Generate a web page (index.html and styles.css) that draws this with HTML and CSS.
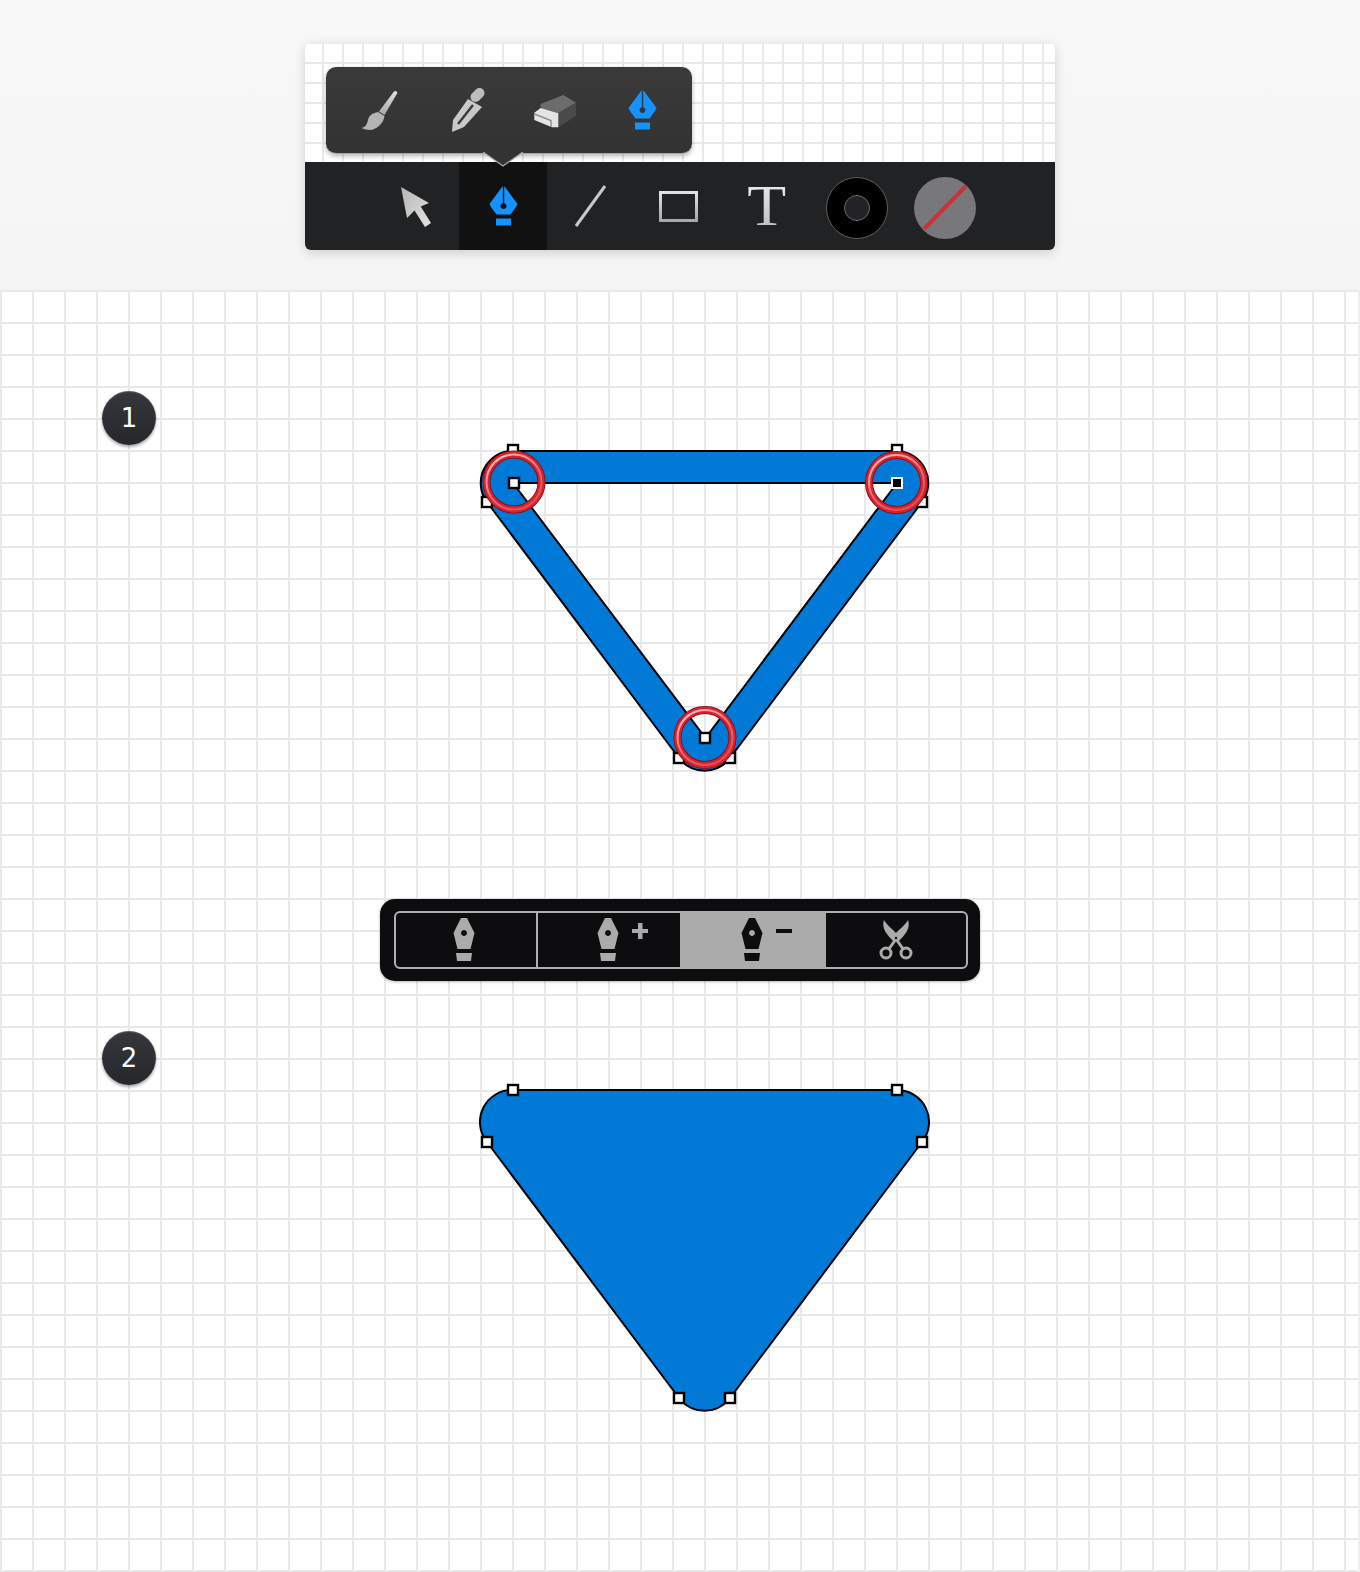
FILE: index.html
```html
<!DOCTYPE html>
<html lang="en">
<head>
    <meta charset="UTF-8">
    <meta name="viewport" content="width=device-width, initial-scale=1.0">
    <title>Pen tool steps</title>
    <link rel="stylesheet" href="styles.css">
</head>
<body>
<svg class="sprite" aria-hidden="true">
    <defs>
        <linearGradient id="metal" x1="0" y1="0" x2="0" y2="1">
            <stop offset="0" stop-color="#e2e2e2"/>
            <stop offset="1" stop-color="#a8a8a8"/>
        </linearGradient>
        <linearGradient id="arrow-metal" x1="0" y1="0" x2="1" y2="1">
            <stop offset="0" stop-color="#b4b4b4"/>
            <stop offset="1" stop-color="#e4e4e4"/>
        </linearGradient>
        <linearGradient id="ring-shine" x1="0.2" y1="0" x2="0.8" y2="1">
            <stop offset="0" stop-color="#f9c4c6"/>
            <stop offset="0.5" stop-color="#ec6a70"/>
            <stop offset="1" stop-color="#e6474f"/>
        </linearGradient>
        <g id="nib-gray">
            <path fill="currentColor" fill-rule="evenodd" d="M7.5 0H13.5L21 15L17 31H4L0 15ZM10.5 12a3 3 0 1 0 .01 0Z"/>
            <path fill="currentColor" d="M2.5 35H18.5L17.5 43H3.5Z"/>
        </g>
        <g id="nib-blue">
            <path fill="#1493ff" fill-rule="evenodd" d="M13.8 0L7.5 8.5L.5 18L2 21L7.5 28.5H21.5L27 21L28.5 18L21.5 8.5L15.2 0V17.2A3 3 0 1 1 13.8 17.2Z"/>
            <path fill="#1493ff" d="M7 32.5H22V39.5H7Z"/>
        </g>
        <g id="handle">
            <rect x="-5" y="-5" width="10" height="10" fill="#fff" stroke="#000" stroke-width="2.4"/>
        </g>
        <g id="ring">
            <circle r="27.5" fill="none" stroke="#7e0a13" stroke-width="8"/>
            <circle r="27.5" fill="none" stroke="#d8232d" stroke-width="6.4"/>
            <circle r="27.5" fill="none" stroke="url(#ring-shine)" stroke-width="2"/>
        </g>
    </defs>
</svg>

<header class="top">
    <div class="panel">
        <div class="mini-grid"></div>
        <div class="toolbar">
            <div class="tool">
                <svg class="tool-svg" viewBox="0 0 88 88"><path fill="url(#arrow-metal)" d="M30 25L58 41L49.7 44.5L60 61L54 65L43.5 48.5L36 56Z"/></svg>
            </div>
            <div class="tool tool-active">
                <svg class="pen-blue" viewBox="0 0 29 40"><use href="#nib-blue"/></svg>
            </div>
            <div class="tool">
                <svg class="tool-svg" viewBox="0 0 88 88"><path stroke="#c8c8c8" stroke-width="3" d="M58 24L29 64"/></svg>
            </div>
            <div class="tool">
                <svg class="tool-svg" viewBox="0 0 88 88"><rect x="25.5" y="30.5" width="36" height="28" fill="none" stroke="url(#metal)" stroke-width="3"/></svg>
            </div>
            <div class="tool"><span class="type-t">T</span></div>
            <div class="tool">
                <svg class="tool-svg" viewBox="0 0 88 88">
                    <circle cx="46" cy="46" r="30.5" fill="#000" stroke="#5e5e5e"/>
                    <circle cx="46" cy="46" r="12.5" fill="#222326" stroke="#6a6a6a"/>
                </svg>
            </div>
            <div class="tool">
                <svg class="tool-svg" viewBox="0 0 88 88">
                    <circle cx="46" cy="46" r="31" fill="#78787a"/>
                    <path stroke="#c8333b" stroke-width="4" d="M67 24L25 67"/>
                </svg>
            </div>
        </div>
        <div class="popup">
            <div class="popup-cell">
                <svg class="popup-svg" viewBox="0 0 88 86">
                    <path fill="url(#metal)" d="M60 24.5a2 2 0 0 1 3.2 1.8L50.5 48L45 44.5Z"/>
                    <path fill="#b4b4b4" d="M44 45L50.5 49C50 56 42 63 36 63C33 63 30 62 27.5 61C32 60 33 57 34 53C35 48 39 46 44 45Z"/>
                </svg>
            </div>
            <div class="popup-cell">
                <svg class="popup-svg" viewBox="0 0 88 86">
                    <path stroke="#bdbdbd" stroke-width="10" stroke-linecap="round" d="M53.5 30L57.5 26"/>
                    <path fill="#c9c9c9" d="M46 32L60 40L42 60L30 65L31 53Z"/>
                    <path stroke="#393939" stroke-width="2.4" d="M51 38L36 57"/>
                </svg>
            </div>
            <div class="popup-cell">
                <svg class="popup-svg" viewBox="0 0 88 86">
                    <path fill="#6c6c6c" d="M30.7 37L53.3 28L66 35.7L48.3 46.3L30.7 41Z"/>
                    <path fill="#4a4a4a" d="M48.3 46.3L66 35.7V49L48.3 60.3Z"/>
                    <path fill="#e4e4e4" d="M24.3 45.7L30.7 41L48.3 46.3V60.3H42L24.3 53Z"/>
                    <path stroke="#8e8e8e" stroke-width="1.4" fill="none" d="M24.3 47L41 53.5V60"/>
                </svg>
            </div>
            <div class="popup-cell">
                <svg class="pen-blue" viewBox="0 0 29 40"><use href="#nib-blue"/></svg>
            </div>
            <svg class="popup-tip" viewBox="0 0 42 16">
                <path fill="#333" d="M1 0H41L21 14Z"/>
                <path fill="none" stroke="#a9a9a9" stroke-width="1.2" d="M1 0L21 14L41 0"/>
            </svg>
        </div>
    </div>
</header>

<main class="stage">
    <div class="badge badge-one">1</div>
    <div class="badge badge-two">2</div>

    <svg class="drawing" viewBox="0 290 1360 1282">
        <path class="shape" fill-rule="evenodd" d="M513 451H897A32 32 0 0 1 922 502L730 758A32 32 0 0 1 679 758L487 502A32 32 0 0 1 513 451ZM513 483L705.5 738L897 483Z"/>
        <use href="#handle" x="513" y="450"/>
        <use href="#handle" x="897" y="450"/>
        <use href="#handle" x="487" y="502"/>
        <use href="#handle" x="922" y="502"/>
        <use href="#handle" x="679" y="758"/>
        <use href="#handle" x="730" y="758"/>
        <use href="#ring" x="514" y="482"/>
        <use href="#ring" x="896.5" y="482.5"/>
        <use href="#ring" x="705" y="737.5"/>
        <use href="#handle" x="514" y="483"/>
        <use href="#handle" x="705" y="738"/>
        <rect class="handle-on" x="892" y="478" width="10" height="10"/>

        <path class="shape" d="M513 1090H897A32 32 0 0 1 922 1142L730 1398A32 32 0 0 1 679 1398L487 1142A32 32 0 0 1 513 1090Z"/>
        <use href="#handle" x="513" y="1090"/>
        <use href="#handle" x="897" y="1090"/>
        <use href="#handle" x="487" y="1142"/>
        <use href="#handle" x="922" y="1142"/>
        <use href="#handle" x="679" y="1398"/>
        <use href="#handle" x="730" y="1398"/>
    </svg>

    <div class="pathfinder">
        <div class="segments">
            <div class="segment seg-a">
                <svg class="seg-svg" viewBox="0 0 140 54"><use href="#nib-gray" x="57.5" y="5"/></svg>
            </div>
            <div class="segment seg-b">
                <svg class="seg-svg" viewBox="0 0 142 54">
                    <use href="#nib-gray" x="59.5" y="5"/>
                    <path fill="currentColor" d="M100 10H104.5V16H110V20H104.5V26H100V20H94V16H100Z"/>
                </svg>
            </div>
            <div class="segment seg-c">
                <svg class="seg-svg" viewBox="0 0 146 54">
                    <use href="#nib-gray" x="61.5" y="5"/>
                    <rect fill="currentColor" x="96" y="16" width="16" height="4"/>
                </svg>
            </div>
            <div class="segment seg-d">
                <svg class="seg-svg" viewBox="0 0 140 54">
                    <path fill="currentColor" d="M82 7C85 15 79 22 72 29L66.5 25C70 18 78 14 82 7Z"/>
                    <path fill="currentColor" d="M58 7C55 15 61 22 68 29L73.5 25C70 18 62 14 58 7Z"/>
                    <path fill="none" stroke="currentColor" stroke-width="3" d="M70 26L62.5 36.5M70 26L77.5 36.5"/>
                    <circle cx="60" cy="40" r="5" fill="none" stroke="currentColor" stroke-width="3"/>
                    <circle cx="80" cy="40" r="5" fill="none" stroke="currentColor" stroke-width="3"/>
                    <circle cx="70" cy="25" r="1.2" fill="#0d0d0f"/>
                </svg>
            </div>
        </div>
    </div>
</main>
</body>
</html>
```

FILE: styles.css
```css
body {
    margin: 0;
    background-color: #fff;
    font-family: "DejaVu Sans", sans-serif;
}
.sprite {
    position: absolute;
    width: 0;
    height: 0;
}
.top {
    height: 290px;
    display: flex;
    justify-content: center;
    background: linear-gradient(#f8f8f8, #f5f5f5);
}
.panel {
    position: relative;
    width: 750px;
    height: 207px;
    margin-top: 43px;
    border-radius: 6px;
    box-shadow: 0 3px 12px rgba(0, 0, 0, 0.16);
}
.mini-grid {
    height: 119px;
    border-radius: 6px 6px 0 0;
    background-color: #fff;
    background-image:
        linear-gradient(to right, #e9e9e9 2px, transparent 2px),
        linear-gradient(to bottom, #e9e9e9 2px, transparent 2px);
    background-size: 20px 20px;
    background-position: 17px 19px;
}
.toolbar {
    height: 88px;
    padding-left: 66px;
    display: flex;
    border-radius: 0 0 6px 6px;
    background-color: #212224;
}
.tool {
    width: 88px;
    height: 88px;
    display: flex;
    align-items: center;
    justify-content: center;
}
.tool-active {
    background-color: #111112;
}
.tool-svg {
    width: 88px;
    height: 88px;
}
.pen-blue {
    width: 29px;
    height: 40px;
}
.type-t {
    display: inline-block;
    transform: scaleX(1.1);
    font-family: "Liberation Serif", serif;
    font-size: 58px;
    line-height: 58px;
    color: transparent;
    background: linear-gradient(#f0f0f0, #b8b8b8);
    -webkit-background-clip: text;
    background-clip: text;
}
.popup {
    position: absolute;
    left: 21px;
    top: 24px;
    width: 366px;
    height: 87px;
    box-sizing: border-box;
    padding-left: 8px;
    display: flex;
    border-radius: 10px;
    border-bottom: 1px solid #a9a9a9;
    background: linear-gradient(#3a3a3a, #323232);
    box-shadow: 0 2px 5px rgba(0, 0, 0, 0.3);
}
.popup-cell {
    width: 88px;
    display: flex;
    align-items: center;
    justify-content: center;
}
.popup-svg {
    width: 88px;
    height: 86px;
}
.popup-tip {
    position: absolute;
    left: 156px;
    top: 85px;
    width: 42px;
    height: 16px;
}
.stage {
    position: relative;
    height: 1282px;
    box-sizing: border-box;
    border-right: 2px solid #eee;
    overflow: hidden;
    background-color: #fff;
    background-image:
        linear-gradient(to right, #e8e8e8 2px, transparent 2px),
        linear-gradient(to bottom, #e8e8e8 2px, transparent 2px);
    background-size: 32px 32px;
}
.drawing {
    position: absolute;
    left: 0;
    top: 0;
    width: 1360px;
    height: 1282px;
}
.shape {
    fill: #007ad6;
    stroke: #000;
    stroke-width: 2;
}
.handle-on {
    fill: #000;
    stroke: #fff;
    stroke-width: 2;
}
.badge {
    position: absolute;
    left: 102px;
    width: 54px;
    height: 54px;
    display: flex;
    align-items: center;
    justify-content: center;
    border-radius: 50%;
    background: linear-gradient(#36373b, #26272b);
    box-shadow: inset 0 1px 1px rgba(255, 255, 255, 0.2), 0 2px 3px rgba(0, 0, 0, 0.35);
    color: #fff;
    font-size: 26px;
}
.badge-one {
    top: 101px;
}
.badge-two {
    top: 741px;
}
.pathfinder {
    position: absolute;
    left: 380px;
    top: 609px;
    width: 600px;
    height: 82px;
    box-sizing: border-box;
    padding: 12px 12px 0 14px;
    border-radius: 15px;
    background-color: #0d0d0f;
    box-shadow: 0 1px 3px rgba(0, 0, 0, 0.3);
}
.segments {
    height: 58px;
    box-sizing: border-box;
    display: flex;
    border: 2px solid #b0b0b0;
    border-radius: 6px;
    color: #ababab;
}
.segment {
    height: 54px;
    flex: none;
}
.seg-a {
    width: 140px;
    border-right: 2px solid #b0b0b0;
}
.seg-b {
    width: 142px;
}
.seg-c {
    width: 146px;
    height: 58px;
    margin-top: -2px;
    padding-top: 2px;
    box-sizing: border-box;
    background-color: #ababab;
    color: #0d0d0f;
}
.seg-d {
    width: 140px;
}
.seg-svg {
    display: block;
    width: 100%;
    height: 54px;
}
```
